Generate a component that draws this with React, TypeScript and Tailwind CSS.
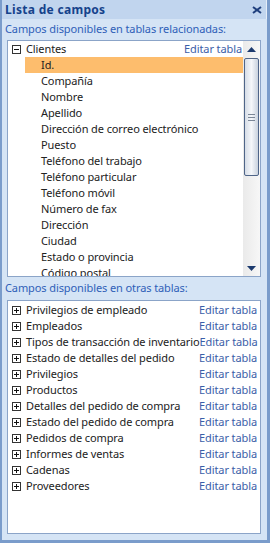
const campos = [
  'Id.',
  'Compañía',
  'Nombre',
  'Apellido',
  'Dirección de correo electrónico',
  'Puesto',
  'Teléfono del trabajo',
  'Teléfono particular',
  'Teléfono móvil',
  'Número de fax',
  'Dirección',
  'Ciudad',
  'Estado o provincia',
  'Código postal',
];

const otrasTablas = [
  'Privilegios de empleado',
  'Empleados',
  'Tipos de transacción de inventario',
  'Estado de detalles del pedido',
  'Privilegios',
  'Productos',
  'Detalles del pedido de compra',
  'Estado del pedido de compra',
  'Pedidos de compra',
  'Informes de ventas',
  'Cadenas',
  'Proveedores',
];

function ExpandBox({ open }: { open: boolean }) {
  return (
    <svg width="9" height="9" viewBox="0 0 9 9" className="shrink-0">
      <rect x="0.5" y="0.5" width="8" height="8" fill="#fff" stroke="#333" />
      <line x1="2" y1="4.5" x2="7" y2="4.5" stroke="#111" />
      {!open && <line x1="4.5" y1="2" x2="4.5" y2="7" stroke="#111" />}
    </svg>
  );
}

function Arrow({ down = false }: { down?: boolean }) {
  return (
    <svg width="9" height="5" viewBox="0 0 9 5">
      {down ? <polygon points="0,0 9,0 4.5,5" fill="#1c3a6e" /> : <polygon points="0,5 9,5 4.5,0" fill="#1c3a6e" />}
    </svg>
  );
}

export default function App() {
  return (
    <div
      className="w-[270px] h-[543px] flex flex-col bg-[#d5e4f5] border-l-2 border-r-[3px] border-b-[3px] border-[#7a9ccb] text-[11px] tracking-[-0.1px] text-[#222]"
      style={{ fontFamily: '"Noto Sans", "Open Sans", sans-serif' }}
    >
      <div className="h-[19px] flex items-center justify-between bg-[#c1d5ee] pl-[3px] pr-[4px] border-r border-[#e4edf8]">
        <span className="font-bold text-[12px] tracking-[0.3px] text-[#15428b] leading-none">Lista de campos</span>
        <svg width="10" height="8" viewBox="0 0 10 8">
          <path d="M1 1 L9 7 M9 1 L1 7" stroke="#1f3f7d" strokeWidth="2" />
        </svg>
      </div>

      <div className="h-[21px] flex items-center pl-[3px] text-[#2f60b8] whitespace-nowrap">
        Campos disponibles en tablas relacionadas:
      </div>

      <div className="ml-[5px] mr-[6px] h-[237px] border border-[#8ba4c8] bg-white flex overflow-hidden">
        <div className="flex-1 min-w-0 overflow-hidden">
          <div className="h-4 flex items-center pl-[4px] pr-[1px]">
            <ExpandBox open />
            <span className="ml-[5px] flex-1">Clientes</span>
            <span className="text-[#3b5ea8]">Editar tabla</span>
          </div>
          {campos.map((c, i) => (
            <div
              key={c}
              className={`h-4 flex items-center pl-[16px] ml-[17px] whitespace-nowrap ${i === 0 ? 'bg-[#fdbd6d]' : ''}`}
            >
              {c}
            </div>
          ))}
        </div>
        <div className="w-[17px] shrink-0 flex flex-col bg-gradient-to-r from-[#eaeaea] to-[#f7f7f7]">
          <div className="h-[16px] flex items-center justify-center">
            <Arrow />
          </div>
          <div className="mx-[1px] mt-[1px] h-[118px] rounded-[2px] border border-[#4f6588] bg-gradient-to-r from-[#d6dde7] via-[#f5f7fa] to-[#c9d2de] flex flex-col items-center justify-center gap-[2px]">
            <div className="w-[7px] h-px bg-[#7b8797]" />
            <div className="w-[7px] h-px bg-[#7b8797]" />
            <div className="w-[7px] h-px bg-[#7b8797]" />
          </div>
          <div className="flex-1" />
          <div className="h-[16px] flex items-center justify-center">
            <Arrow down />
          </div>
        </div>
      </div>

      <div className="h-[23px] flex items-center pl-[3px] text-[#2f60b8] whitespace-nowrap">
        Campos disponibles en otras tablas:
      </div>

      <div className="ml-[5px] mr-[6px] h-[234px] border border-[#8ba4c8] bg-white overflow-hidden pt-[1px]">
        {otrasTablas.map((t) => (
          <div key={t} className="h-4 flex items-center pl-[4px] pr-[3px] whitespace-nowrap">
            <ExpandBox open={false} />
            <span className="ml-[5px] flex-1">{t}</span>
            <span className="text-[#3b5ea8]">Editar tabla</span>
          </div>
        ))}
      </div>
    </div>
  );
}
